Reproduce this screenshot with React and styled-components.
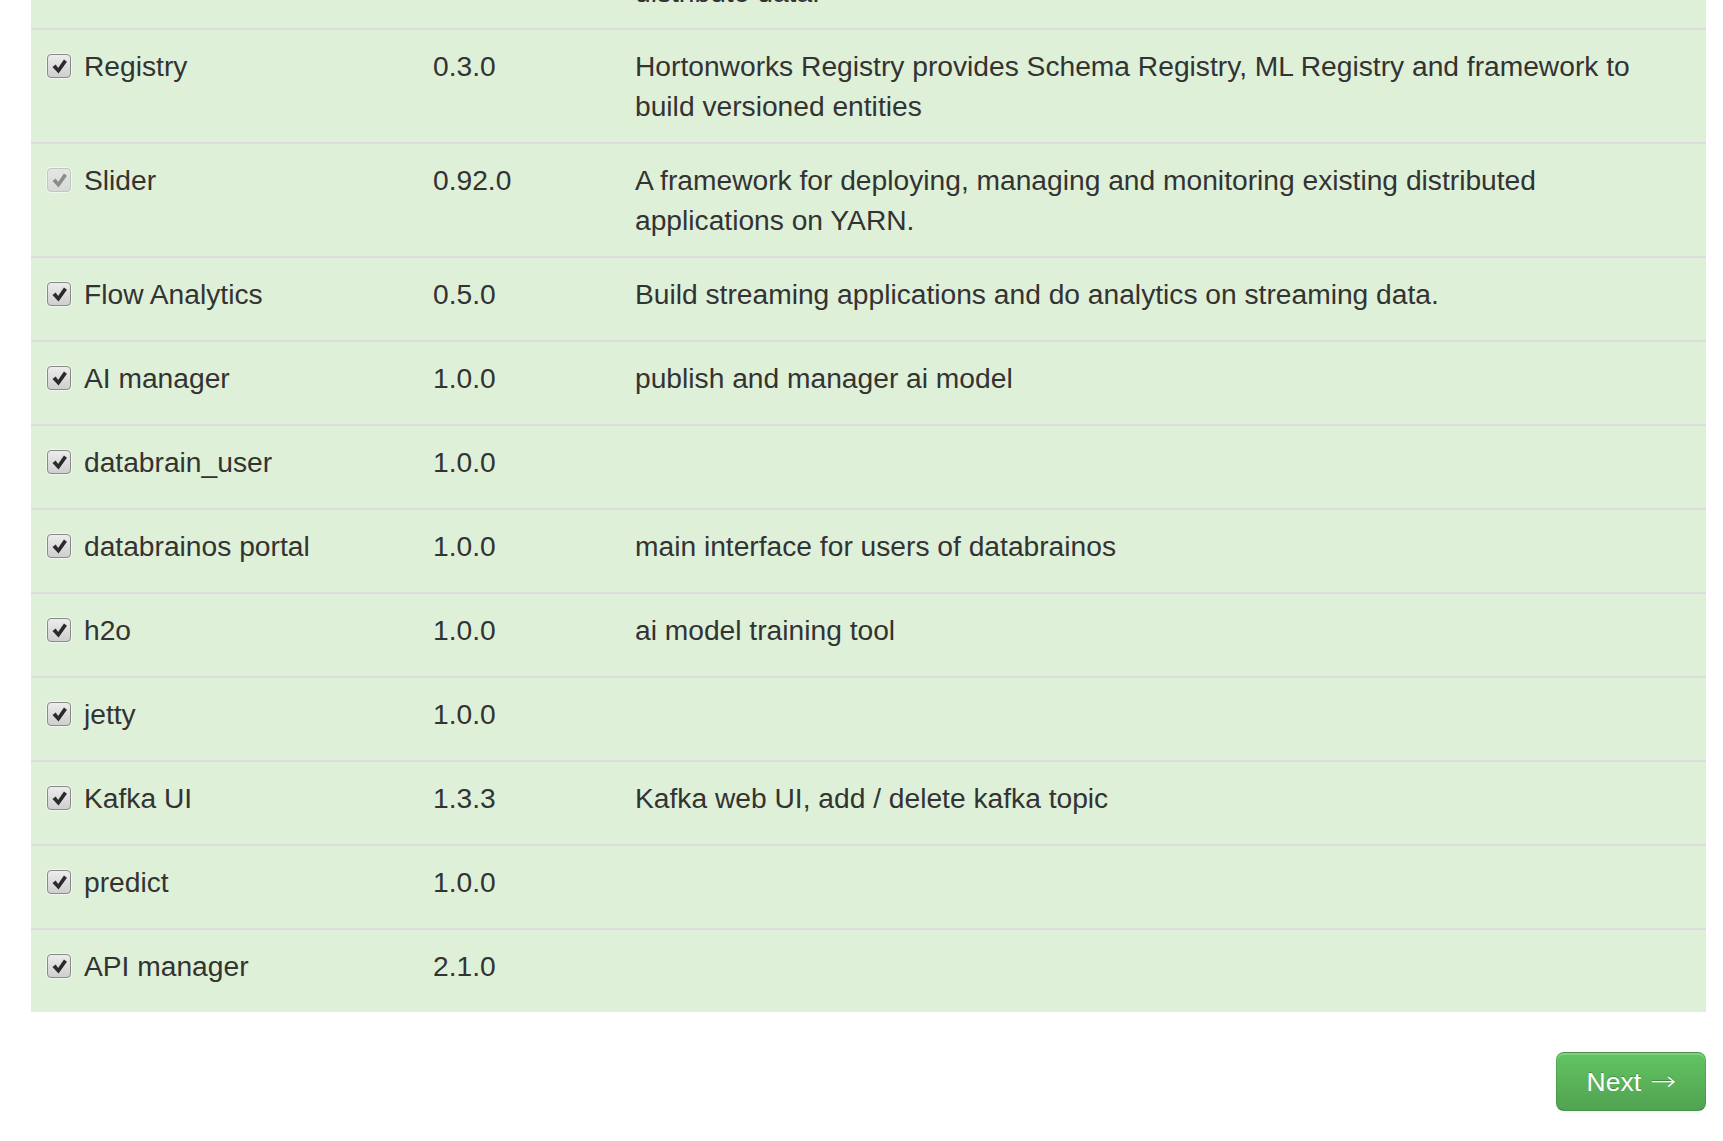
import styled, { createGlobalStyle } from "styled-components";

const GlobalStyle = createGlobalStyle`
  html, body {
    margin: 0;
    padding: 0;
    background: #fff;
  }
  body {
    font-family: "Liberation Sans", Arial, Helvetica, sans-serif;
    color: #333;
  }
`;

const services = [
  {
    name: "NiFi",
    version: "1.5.0",
    description:
      "Apache NiFi is an easy to use, powerful, and reliable system to process and distribute data.",
  },
  {
    name: "Registry",
    version: "0.3.0",
    description:
      "Hortonworks Registry provides Schema Registry, ML Registry and framework to build versioned entities",
  },
  {
    name: "Slider",
    version: "0.92.0",
    description:
      "A framework for deploying, managing and monitoring existing distributed applications on YARN.",
    locked: true,
  },
  {
    name: "Flow Analytics",
    version: "0.5.0",
    description: "Build streaming applications and do analytics on streaming data.",
  },
  { name: "AI manager", version: "1.0.0", description: "publish and manager ai model" },
  { name: "databrain_user", version: "1.0.0", description: "" },
  {
    name: "databrainos portal",
    version: "1.0.0",
    description: "main interface for users of databrainos",
  },
  { name: "h2o", version: "1.0.0", description: "ai model training tool" },
  { name: "jetty", version: "1.0.0", description: "" },
  {
    name: "Kafka UI",
    version: "1.3.3",
    description: "Kafka web UI, add / delete kafka topic",
  },
  { name: "predict", version: "1.0.0", description: "" },
  { name: "API manager", version: "2.1.0", description: "" },
];

/* page is scrolled so the first service row sits mostly above the fold */
const Page = styled.div`
  margin-top: -86px;
  padding: 0 17px 20px 31px;
`;

const ServiceTable = styled.div`
  display: flex;
  flex-direction: column;
  background: #dff0d8;
`;

const Row = styled.div`
  display: grid;
  grid-template-columns: 386px 202px 1fr;
  min-height: 84px;
  box-sizing: border-box;
  border-top: 2px solid #dcdcdc;
`;

const Cell = styled.div`
  padding: ${(p) => (p.$wide ? "16px 40px 16px 16px" : "16px")};
  font-size: 28.2px;
  line-height: 40px;
  color: #333;
`;

const NameLabel = styled.label`
  display: flex;
  align-items: center;
  gap: 13px;
`;

const Box = styled.span`
  flex: none;
  width: 22px;
  height: 22px;
  display: inline-flex;
  align-items: center;
  justify-content: center;
  border-radius: 4px;
  border: 1px solid ${(p) => (p.$locked ? "#c2c6c2" : "#8a8a8a")};
  background: ${(p) =>
    p.$locked
      ? "linear-gradient(#e4e7e4, #d6dad6)"
      : "linear-gradient(#ececec, #cfcfcf)"};
  box-shadow: 0 0 0 1px rgba(255, 255, 255, 0.5);
  color: ${(p) => (p.$locked ? "#8a8d8a" : "#2a2a2a")};
`;

const Footer = styled.div`
  display: flex;
  justify-content: flex-end;
  margin-top: 40px;
`;

const NextButton = styled.button`
  display: inline-flex;
  align-items: center;
  gap: 9px;
  font-family: "Liberation Sans", Arial, Helvetica, sans-serif;
  font-size: 26.5px;
  line-height: 36px;
  padding: 11px 29px 10px 30px;
  color: #fff;
  text-shadow: 0 -1px 0 rgba(0, 0, 0, 0.25);
  background: linear-gradient(#62c462, #51a351);
  border: 1px solid rgba(0, 0, 0, 0.1);
  border-bottom-color: rgba(0, 0, 0, 0.25);
  border-radius: 8px;
  box-shadow: inset 0 2px 0 rgba(255, 255, 255, 0.2),
    0 1px 2px rgba(0, 0, 0, 0.05);
  cursor: pointer;
`;

const Arrow = styled.span`
  font-family: "DejaVu Sans", sans-serif;
  font-weight: 300;
  font-size: 31px;
  line-height: 36px;
  position: relative;
  top: -1px;
  transform: scaleY(0.85);
`;

function CheckBox({ locked }) {
  return (
    <Box $locked={locked}>
      <svg width="17" height="17" viewBox="0 0 16 16">
        <path
          d="M1.4 8.4 L4.4 6.2 L6.7 9.3 L12.2 1.4 L15 3.5 L7.1 14.6 Z"
          fill="currentColor"
        />
      </svg>
    </Box>
  );
}

function ServiceRow({ service }) {
  return (
    <Row>
      <Cell>
        <NameLabel>
          <CheckBox locked={service.locked} />
          {service.name}
        </NameLabel>
      </Cell>
      <Cell>{service.version}</Cell>
      <Cell $wide>{service.description}</Cell>
    </Row>
  );
}

export default function App() {
  return (
    <>
      <GlobalStyle />
      <Page>
        <ServiceTable>
          {services.map((s) => (
            <ServiceRow key={s.name} service={s} />
          ))}
        </ServiceTable>
        <Footer>
          <NextButton>
            Next<Arrow>→</Arrow>
          </NextButton>
        </Footer>
      </Page>
    </>
  );
}
